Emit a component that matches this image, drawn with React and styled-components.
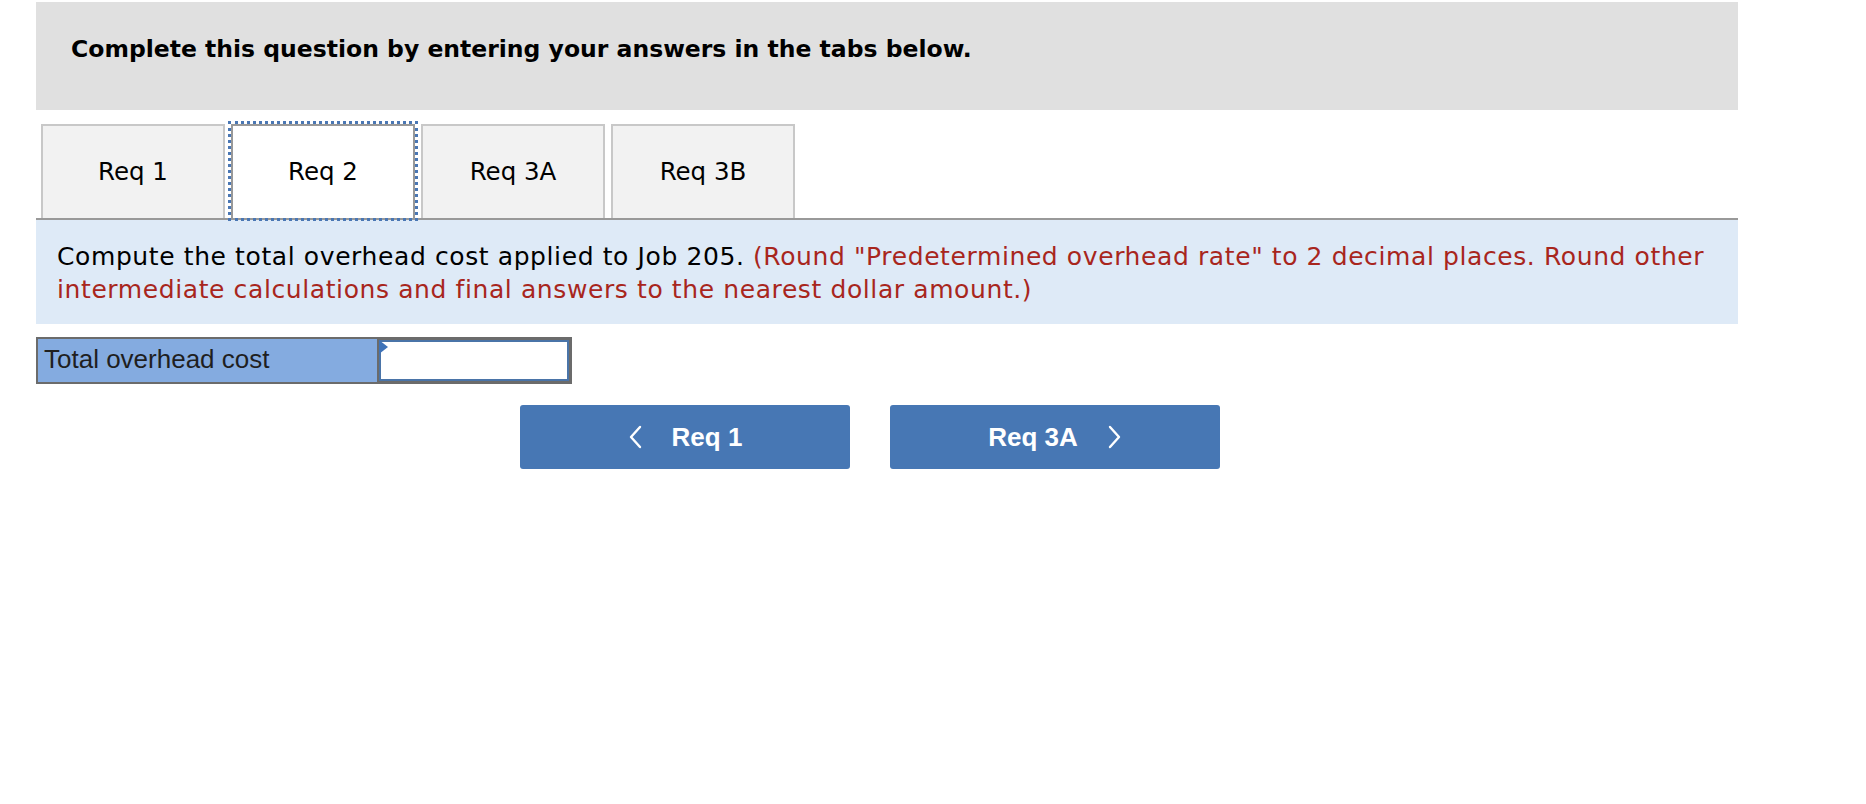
import React from "react";
import styled, { createGlobalStyle } from "styled-components";

const Global = createGlobalStyle`
  html, body { margin: 0; padding: 0; background: #ffffff; }
  body { font-family: "DejaVu Sans", Verdana, sans-serif; }
`;

const Page = styled.div`
  width: 1702px;
  padding: 2px 0 0 36px;
`;

const Header = styled.div`
  height: 108px;
  box-sizing: border-box;
  background: #e0e0e0;
  padding: 33px 35px;
  font-family: "DejaVu Sans", Verdana, sans-serif;
  font-weight: bold;
  font-size: 23.5px;
  color: #000;
`;

const TabBar = styled.div`
  display: flex;
  gap: 6px;
  margin-top: 12px;
  padding-left: 5px;
  border-bottom: 2px solid #999999;
`;

const Tab = styled.div`
  width: 184px;
  height: 94px;
  box-sizing: border-box;
  display: flex;
  align-items: center;
  justify-content: center;
  border: 2px solid ${(p) => (p.$active ? "#999999" : "#c8c8c8")};
  border-bottom: none;
  background: ${(p) => (p.$active ? "#ffffff" : "#f2f2f2")};
  font-size: 24.5px;
  color: #000;
  outline: ${(p) => (p.$active ? "3px dotted #4a77b4" : "none")};
  outline-offset: 0px;
  margin-top: 2px;
  padding-bottom: 2px;
`;

const Prompt = styled.div`
  background: #deeaf7;
  padding: 20px 8px 18px 21px;
  font-size: 25px;
  letter-spacing: 0.6px;
  line-height: 33px;
  color: #000;
`;

const Note = styled.span`
  color: #a8261d;
`;

const Row = styled.div`
  display: flex;
  margin-top: 13px;
`;

const Label = styled.div`
  width: 342px;
  height: 47px;
  box-sizing: border-box;
  background: #84abe0;
  border: 2px solid #6b6b6b;
  border-right-width: 1px;
  font-family: "Liberation Sans", Arial, sans-serif;
  font-size: 26px;
  color: #1f1f1f;
  display: flex;
  align-items: center;
  padding: 0 6px 2px;
`;

const InputWrap = styled.div`
  position: relative;
  width: 194px;
  height: 47px;
  box-sizing: border-box;
  border: 2px solid #6b6b6b;
  border-left: none;
  background: #6b6b6b;
  padding: 1px;
`;

const Input = styled.input`
  width: 100%;
  height: 100%;
  box-sizing: border-box;
  border: 2px solid #4a74a8;
  background: #fff;
  outline: none;
  margin: 0;
`;

const Corner = styled.span`
  position: absolute;
  left: 1px;
  top: 1px;
  width: 0;
  height: 0;
  border-top: 7px solid transparent;
  border-bottom: 7px solid transparent;
  border-left: 9px solid #3f73b8;
`;

const NavRow = styled.div`
  display: flex;
  gap: 40px;
  margin-top: 21px;
  padding-left: 484px;
`;

const NavButton = styled.button`
  width: 330px;
  height: 64px;
  border: none;
  border-radius: 3px;
  background: #4777b4;
  color: #fff;
  font-family: "Liberation Sans", Arial, sans-serif;
  font-weight: bold;
  font-size: 26px;
  display: flex;
  align-items: center;
  justify-content: center;
  gap: 30px;
  padding: 0;
  cursor: pointer;
`;

const Chevron = ({ dir }) => (
  <svg width="14" height="24" viewBox="0 0 14 24" fill="none">
    <path
      d={dir === "left" ? "M12 2 L3 12 L12 22" : "M2 2 L11 12 L2 22"}
      stroke="#fff"
      strokeWidth="2.4"
      strokeLinecap="round"
      strokeLinejoin="round"
    />
  </svg>
);

const tabs = ["Req 1", "Req 2", "Req 3A", "Req 3B"];

export default function App() {
  return (
    <>
      <Global />
      <Page>
        <Header>Complete this question by entering your answers in the tabs below.</Header>
        <TabBar>
          {tabs.map((t) => (
            <Tab key={t} $active={t === "Req 2"}>
              {t}
            </Tab>
          ))}
        </TabBar>
        <Prompt>
          Compute the total overhead cost applied to Job 205.{" "}
          <Note>
            (Round "Predetermined overhead rate" to 2 decimal places. Round other intermediate
            calculations and final answers to the nearest dollar amount.)
          </Note>
        </Prompt>
        <Row>
          <Label>Total overhead cost</Label>
          <InputWrap>
            <Input type="text" aria-label="Total overhead cost" />
            <Corner />
          </InputWrap>
        </Row>
        <NavRow>
          <NavButton>
            <Chevron dir="left" />
            <span>Req 1</span>
          </NavButton>
          <NavButton>
            <span>Req 3A</span>
            <Chevron dir="right" />
          </NavButton>
        </NavRow>
      </Page>
    </>
  );
}
